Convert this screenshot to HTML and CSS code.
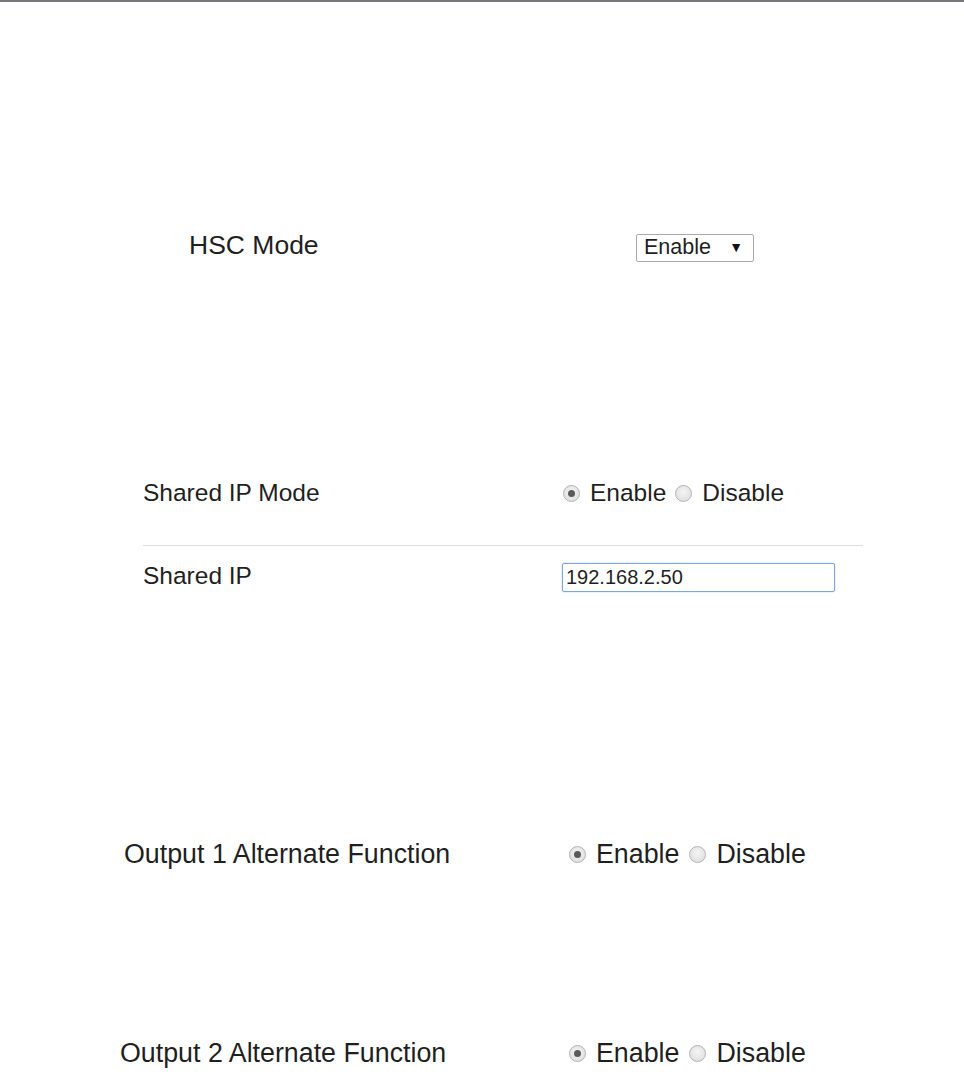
FILE: index.html
```html
<!DOCTYPE html>
<html lang="en">
<head>
  <meta charset="UTF-8">
  <meta name="viewport" content="width=device-width, initial-scale=1">
  <title>Device Settings</title>
  <link rel="stylesheet" href="styles.css">
</head>
<body>
  <div class="top-bar"></div>

  <!-- HSC mode -->
  <div class="setting hsc">
    <span class="label">HSC Mode</span>
    <span class="select-wrap">
      <select class="select">
        <option>Enable</option>
        <option>Disable</option>
      </select>
    </span>
  </div>

  <!-- Shared IP -->
  <div class="shared">
    <div class="shared-row first">
      <span class="label">Shared IP Mode</span>
      <span class="options">
        <label class="opt"><input type="radio" name="sharedMode" checked><span>Enable</span></label>
        <label class="opt"><input type="radio" name="sharedMode"><span>Disable</span></label>
      </span>
    </div>
    <div class="shared-row second">
      <span class="label">Shared IP</span>
      <input type="text" class="ip-input" value="192.168.2.50">
    </div>
  </div>

  <!-- Output alternate functions -->
  <div class="setting output out1">
    <span class="label">Output 1 Alternate Function</span>
    <span class="options">
      <label class="opt"><input type="radio" name="out1" checked><span>Enable</span></label>
      <label class="opt"><input type="radio" name="out1"><span>Disable</span></label>
    </span>
  </div>

  <div class="setting output out2">
    <span class="label">Output 2 Alternate Function</span>
    <span class="options">
      <label class="opt"><input type="radio" name="out2" checked><span>Enable</span></label>
      <label class="opt"><input type="radio" name="out2"><span>Disable</span></label>
    </span>
  </div>
</body>
</html>
```

FILE: styles.css
```css
body {
  margin: 0;
  background-color: #ffffff;
  color: #1f1f1f;
  font-family: 'Liberation Sans', Arial, sans-serif;
  height: 1081px;
  overflow: hidden;
}
.top-bar {
  height: 2px;
  background-color: #77767b;
}
.setting {
  display: flex;
  align-items: center;
  height: 28px;
}
.label {
  display: inline-block;
  white-space: nowrap;
}
/* HSC mode row */
.hsc {
  margin-top: 232px;
  padding-left: 189px;
  font-size: 26.5px;
}
.hsc .label {
  width: 447px;
  margin-bottom: 6px;
}
.select-wrap {
  position: relative;
  display: inline-block;
}
.select {
  appearance: none;
  -webkit-appearance: none;
  display: block;
  width: 118px;
  height: 28px;
  margin: 0;
  padding: 0 0 3px 7px;
  border: 1px solid #a9a9a9;
  border-radius: 2px;
  background-color: #ffffff;
  color: #1f1f1f;
  font-family: 'Liberation Sans', Arial, sans-serif;
  font-size: 21.5px;
}
.select-wrap::after {
  content: "\25BC";
  position: absolute;
  right: 11px;
  top: 5px;
  font-size: 14px;
  color: #111;
  pointer-events: none;
}
/* Shared IP block */
.shared {
  margin: 217px 0 0 143px;
  width: 720px;
  font-size: 24.5px;
}
.shared-row {
  display: flex;
  align-items: center;
}
.shared-row .label {
  width: 420px;
}
.shared-row.first {
  height: 28px;
  padding-bottom: 38px;
  border-bottom: 1px solid #dcdcdc;
}
.shared-row.second {
  height: 29px;
  padding-top: 17px;
}
.shared-row.second .label {
  margin-bottom: 4px;
}
.ip-input {
  width: 273px;
  height: 29px;
  box-sizing: border-box;
  margin: 0 0 0 -1px;
  padding: 0 3px;
  border: 1px solid #7ea6dc;
  border-radius: 2px;
  box-shadow: 0 0 2px #b7cff0;
  color: #1f1f1f;
  font-family: 'Liberation Sans', Arial, sans-serif;
  font-size: 20px;
  outline: none;
}
/* Radio options */
.options {
  display: flex;
  align-items: center;
}
.opt {
  display: flex;
  align-items: center;
  margin-right: 9px;
}
.opt input {
  appearance: none;
  -webkit-appearance: none;
  width: 17px;
  height: 17px;
  margin: 0 10px 0 0;
  border: 1px solid #b3b3b3;
  border-radius: 50%;
  background: radial-gradient(circle at 50% 40%, #f4f4f4 0%, #e2e2e2 70%, #d4d4d4 100%);
  box-sizing: border-box;
  position: relative;
}
.opt input:checked::after {
  content: "";
  position: absolute;
  left: 4px;
  top: 4px;
  width: 7px;
  height: 7px;
  border-radius: 50%;
  background-color: #5a5a5a;
}
/* Output rows */
.output {
  font-size: 26.8px;
}
.out1 {
  margin-top: 248px;
  padding-left: 124px;
}
.out1 .label {
  width: 445px;
}
.out2 {
  margin-top: 171px;
  padding-left: 120px;
}
.out2 .label {
  width: 449px;
}
.output .opt {
  margin-right: 10px;
}
```
